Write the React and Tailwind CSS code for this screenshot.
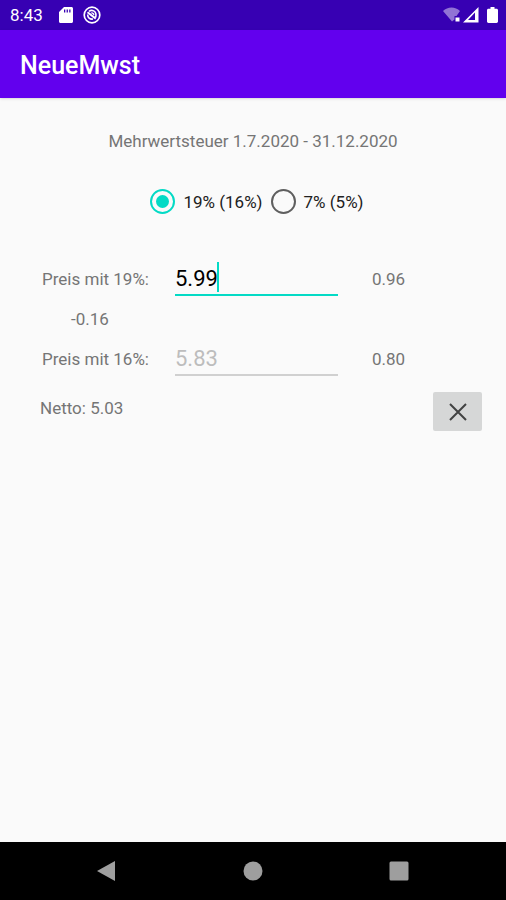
import { useState } from 'react';

const RATES = [
  { id: '19', label: '19% (16%)', from: '19%', to: '16%' },
  { id: '7', label: '7% (5%)', from: '7%', to: '5%' },
];

function StatusBar() {
  return (
    <div className="flex h-[30px] items-center bg-[#3700b3] pl-[10px] pr-2 text-white">
      <span className="text-[17px] leading-6">8:43</span>
      <svg className="ml-4 h-[18px] w-[14px]" viewBox="0 0 14 18" fill="currentColor">
        <path
          fillRule="evenodd"
          d="M5 1h7.5c.8 0 1.5.7 1.5 1.5v13c0 .8-.7 1.5-1.5 1.500h-11C.7 17 0 16.300 0 15.500V6zM5 3.500v3h1.300v-3zm2.600 0v3h1.300v-3zm2.600 0v3h1.300v-3z"
        />
      </svg>
      <svg className="ml-[10px] h-[18px] w-[18px]" viewBox="0 0 18 18" fill="none" stroke="currentColor">
        <circle cx="9" cy="9" r="7.800" strokeWidth="1.700" />
        <path d="M4.500 6.200 12.800 12.600" strokeWidth="2" />
        <path d="M6 5.300c3-2.200 7-.2 7 3.700 0 .9-.2 1.600-.6 2.200M4.700 8.500c-.2 3 2.200 5 5.300 4.500" strokeWidth="1.600" />
        <path d="M8.300 6.900c1.600-.2 2.700.9 2.500 2.300" strokeWidth="1.300" />
      </svg>
      <div className="ml-auto flex items-center">
        <svg className="h-[18px] w-[17px]" viewBox="0 0 17 18" fill="currentColor">
          <path d="M0 5C4.500.3 12.500.3 17 5l-3.500 5H11.500v3.500l-2.500 2z" opacity=".45" />
          <path d="M12.500 11.500h4v4h-4z" />
        </svg>
        <svg className="ml-0.5 h-[18px] w-[17px]" viewBox="0 0 17 18" fill="currentColor">
          <path fillRule="evenodd" d="M16.500 1v15.500H1zM13 6.500 6 14h7z" />
        </svg>
        <svg className="ml-2 h-[18px] w-[11px]" viewBox="0 0 11 18" fill="currentColor">
          <path d="M3.500 1h4v1.800h2c.8 0 1.500.6 1.500 1.400v11.400c0 .8-.7 1.400-1.500 1.400h-8C.7 17 0 16.400 0 15.600V4.200c0-.8.7-1.400 1.500-1.400h2z" />
        </svg>
      </div>
    </div>
  );
}

function NavBar() {
  return (
    <nav className="flex h-[58px] items-center justify-center gap-[126px] bg-black text-[#9e9e9e]">
      <button type="button" aria-label="Zurück">
        <svg className="h-5 w-5" viewBox="0 0 20 20" fill="currentColor">
          <path d="M18 0v20L0 10z" />
        </svg>
      </button>
      <button type="button" aria-label="Startseite">
        <svg className="h-5 w-5" viewBox="0 0 20 20" fill="currentColor">
          <circle cx="10" cy="10" r="9.500" />
        </svg>
      </button>
      <button type="button" aria-label="Übersicht">
        <svg className="h-5 w-5" viewBox="0 0 20 20" fill="currentColor">
          <rect x=".5" y=".5" width="19" height="19" rx="1.500" />
        </svg>
      </button>
    </nav>
  );
}

export default function App() {
  const [rateId, setRateId] = useState('19');
  const [price, setPrice] = useState('5.99');
  const rate = RATES.find((r) => r.id === rateId);

  return (
    <div className="flex min-h-screen flex-col bg-[#fafafa] font-['Roboto',sans-serif] text-[17px] leading-6 text-[#757575]">
      <StatusBar />
      <header className="flex h-[68px] items-center bg-[#6200ee] px-5 pt-1 shadow-sm">
        <h1 className="text-[25px] font-medium text-white">NeueMwst</h1>
      </header>

      <main className="flex-1 pt-[31px]">
        <p className="text-center">Mehrwertsteuer 1.7.2020 - 31.12.2020</p>

        <div className="mt-9 flex justify-center gap-2 pl-2 text-[#212121]">
          {RATES.map((r) => (
            <label key={r.id} className="flex items-center gap-2">
              <input
                type="radio"
                name="rate"
                value={r.id}
                checked={r.id === rateId}
                onChange={() => setRateId(r.id)}
                className="grid h-[25px] w-[25px] appearance-none place-items-center rounded-full border-2 border-[#5f5f5f] before:h-[13px] before:w-[13px] before:rounded-full checked:border-[#03dac5] checked:before:bg-[#03dac5]"
              />
              {r.label}
            </label>
          ))}
        </div>

        <div className="mt-12 grid grid-cols-[109px_1fr_120px] items-center gap-x-6 gap-y-[11px] pl-[42px] pr-6">
          <label htmlFor="gross" className="whitespace-nowrap">
            Preis mit {rate.from}:
          </label>
          <div className="relative">
            <input
              id="gross"
              type="text"
              inputMode="decimal"
              value={price}
              onChange={(e) => setPrice(e.target.value)}
              className="block h-[34px] w-full border-b-2 border-[#03dac5] bg-transparent text-[22px] text-black caret-transparent outline-none"
            />
            <span className="absolute left-[42px] top-0 h-[30px] w-0.5 bg-[#03dac5]" />
          </div>
          <span className="pl-[10px]">0.96</span>

          <span className="col-span-3 w-24 text-center">-0.16</span>

          <label htmlFor="reduced" className="whitespace-nowrap">
            Preis mit {rate.to}:
          </label>
          <input
            id="reduced"
            type="text"
            placeholder="5.83"
            className="block h-[34px] w-full border-b-2 border-[#d0d0d0] bg-transparent text-[22px] outline-none placeholder:text-[#bdbdbd]"
          />
          <span className="pl-[10px]">0.80</span>
        </div>

        <div className="mt-4 flex items-start justify-between pl-10 pr-6">
          <span className="pt-1">Netto: 5.03</span>
          <button
            type="button"
            aria-label="Löschen"
            onClick={() => setPrice('')}
            className="grid h-[39px] w-[49px] place-items-center rounded-xs bg-[#d6d7d7] text-[#424242]"
          >
            <svg className="h-[18px] w-[18px]" viewBox="0 0 18 18" fill="none" stroke="currentColor" strokeWidth="2">
              <path d="M1 1 17 17M17 1 1 17" />
            </svg>
          </button>
        </div>
      </main>

      <NavBar />
    </div>
  );
}
